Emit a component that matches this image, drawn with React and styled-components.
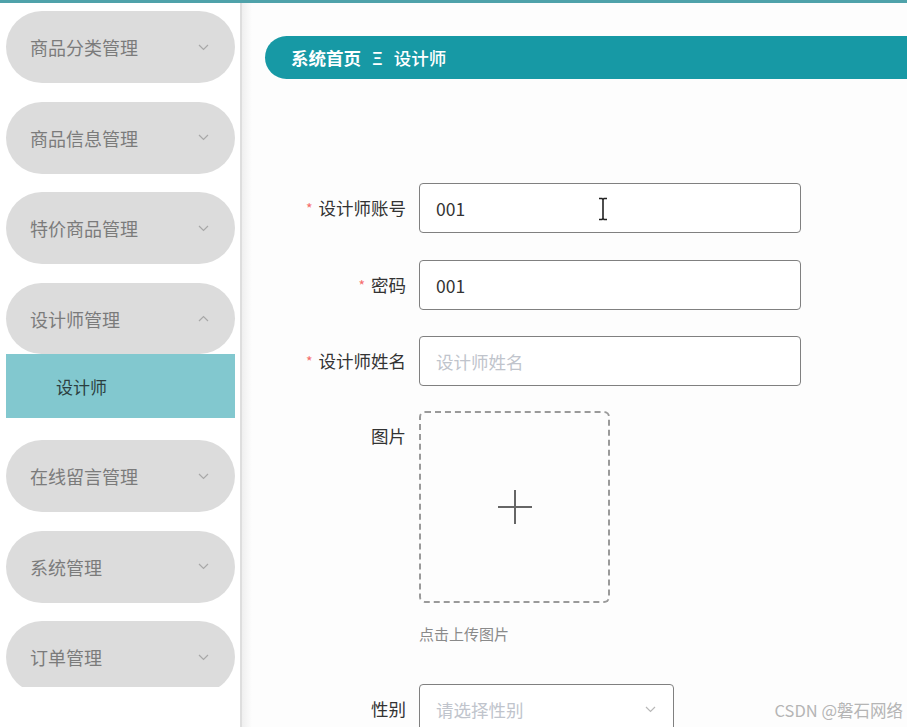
import styled, { createGlobalStyle } from 'styled-components';

const GlobalStyle = createGlobalStyle`
  html, body {
    margin: 0;
    padding: 0;
    background: #ffffff;
    font-family: "Noto Sans CJK SC", "Noto Sans", "Liberation Sans", sans-serif;
  }
`;

const Page = styled.div`
  width: 907px;
  height: 727px;
  overflow: hidden;
  display: flex;
  flex-direction: column;
  position: relative;
`;

const TopBar = styled.div`
  height: 3px;
  background: #4fa2aa;
  flex-shrink: 0;
`;

const Body = styled.div`
  flex: 1;
  display: flex;
  min-height: 0;
`;

const Sidebar = styled.aside`
  width: 240px;
  flex-shrink: 0;
  border-right: 2px solid #dedede;
  background: #ffffff;
`;

const MenuList = styled.div`
  height: 684px;
  overflow: hidden;
  padding: 8px 0 0 6px;
  box-sizing: border-box;
  display: flex;
  flex-direction: column;
`;

const MenuGroup = styled.div`
  margin-bottom: ${(p) => (p.$open ? 22 : 18.7)}px;
  width: 229px;
`;

const Pill = styled.div`
  height: ${(p) => (p.$h ? p.$h : 72)}px;
  border-radius: 36px;
  background: #dcdcdc;
  display: flex;
  align-items: center;
  justify-content: space-between;
  padding: 0 26px 0 24px;
  box-sizing: border-box;
  font-size: 18px;
  color: #7b7b7b;
`;

const SubItem = styled.div`
  height: 64px;
  background: #82c8cf;
  display: flex;
  align-items: center;
  padding-left: 50px;
  font-size: 17px;
  color: #2c3e40;
`;

const Shadow = styled.div`
  width: 10px;
  flex-shrink: 0;
  background: linear-gradient(to right, #efefef, #fdfdfd);
`;

const Main = styled.main`
  flex: 1;
  background: #fdfdfd;
  padding: 33px 0 0 13px;
  box-sizing: border-box;
`;

const Breadcrumb = styled.div`
  height: 43px;
  background: #1799a5;
  border-radius: 22px 0 0 22px;
  display: flex;
  align-items: center;
  padding-left: 26px;
  gap: 11px;
  color: #ffffff;
  font-size: 17.5px;
`;

const Crumb = styled.span`
  font-weight: ${(p) => (p.$bold ? 700 : 500)};
`;

const Form = styled.div`
  margin-top: 104px;
`;

const Row = styled.div`
  display: flex;
  align-items: flex-start;
  margin-bottom: ${(p) => p.$mb}px;
`;

const Label = styled.div`
  width: 154px;
  padding-right: 13px;
  box-sizing: border-box;
  text-align: right;
  line-height: 50px;
  font-size: 17.5px;
  color: #333333;
`;

const Star = styled.span`
  color: #f56c6c;
  font-size: 14px;
  margin-right: 6px;
  position: relative;
  top: -1px;
`;

const Field = styled.div`
  width: ${(p) => p.$w}px;
  height: 50px;
  border: 1px solid #808080;
  border-radius: 4px;
  box-sizing: border-box;
  display: flex;
  align-items: center;
  justify-content: space-between;
  padding: 0 16px;
  font-size: 17.5px;
  color: ${(p) => (p.$placeholder ? '#c0c4cc' : '#333333')};
  background: #ffffff;
  position: relative;
`;

const Cursor = styled.svg`
  position: absolute;
  left: 177px;
  top: 13px;
`;

const UploadCol = styled.div`
  display: flex;
  flex-direction: column;
`;

const UploadBox = styled.div`
  width: 191px;
  height: 192px;
  border: 2px dashed #9a9a9a;
  border-radius: 6px;
  box-sizing: border-box;
  display: flex;
  align-items: center;
  justify-content: center;
`;

const Hint = styled.div`
  margin-top: 21px;
  font-size: 15px;
  line-height: 20px;
  color: #8a8a8a;
`;

const Watermark = styled.div`
  position: absolute;
  right: 4px;
  bottom: 5px;
  font-size: 16.5px;
  color: #b5b5b5;
`;

const Chevron = ({ up, color = '#a8a8a8', w = 11 }) => (
  <svg width={w} height={7} viewBox="0 0 11 7">
    <polyline
      points={up ? '1,6 5.5,1.5 10,6' : '1,1 5.5,5.5 10,1'}
      fill="none"
      stroke={color}
      strokeWidth="1.2"
    />
  </svg>
);

const menus = [
  { name: '商品分类管理' },
  { name: '商品信息管理' },
  { name: '特价商品管理' },
  { name: '设计师管理', open: true, h: 71, items: ['设计师'] },
  { name: '在线留言管理' },
  { name: '系统管理' },
  { name: '订单管理' },
];

function App() {
  return (
    <Page>
      <GlobalStyle />
      <TopBar />
      <Body>
        <Sidebar>
          <MenuList>
            {menus.map((m) => (
              <MenuGroup key={m.name} $open={m.open}>
                <Pill $h={m.h}>
                  <span>{m.name}</span>
                  <Chevron up={m.open} />
                </Pill>
                {m.items && m.items.map((it) => <SubItem key={it}>{it}</SubItem>)}
              </MenuGroup>
            ))}
          </MenuList>
        </Sidebar>
        <Shadow />
        <Main>
          <Breadcrumb>
            <Crumb $bold>系统首页</Crumb>
            <Crumb>Ξ</Crumb>
            <Crumb>设计师</Crumb>
          </Breadcrumb>
          <Form>
            <Row $mb={26}>
              <Label><Star>*</Star>设计师账号</Label>
              <Field $w={382}>
                001
                <Cursor width="12" height="24" viewBox="0 0 12 24">
                  <path d="M2 1.5h3l1 1 1-1h3M6 2.5v19M2 22.5h3l1-1 1 1h3" fill="none" stroke="#222" strokeWidth="1.6" />
                </Cursor>
              </Field>
            </Row>
            <Row $mb={25}>
              <Label><Star>*</Star>密码</Label>
              <Field $w={382}>001</Field>
            </Row>
            <Row $mb={24}>
              <Label><Star>*</Star>设计师姓名</Label>
              <Field $w={382} $placeholder>设计师姓名</Field>
            </Row>
            <Row $mb={40}>
              <Label>图片</Label>
              <UploadCol>
                <UploadBox>
                  <svg width="36" height="36" viewBox="0 0 36 36">
                    <path d="M18 1v34M1 18h34" stroke="#666" strokeWidth="2" />
                  </svg>
                </UploadBox>
                <Hint>点击上传图片</Hint>
              </UploadCol>
            </Row>
            <Row $mb={0}>
              <Label>性别</Label>
              <Field $w={255} $placeholder>
                请选择性别
                <Chevron color="#b8b8b8" w={13} />
              </Field>
            </Row>
          </Form>
        </Main>
      </Body>
      <Watermark>CSDN @磐石网络</Watermark>
    </Page>
  );
}

export default App;
